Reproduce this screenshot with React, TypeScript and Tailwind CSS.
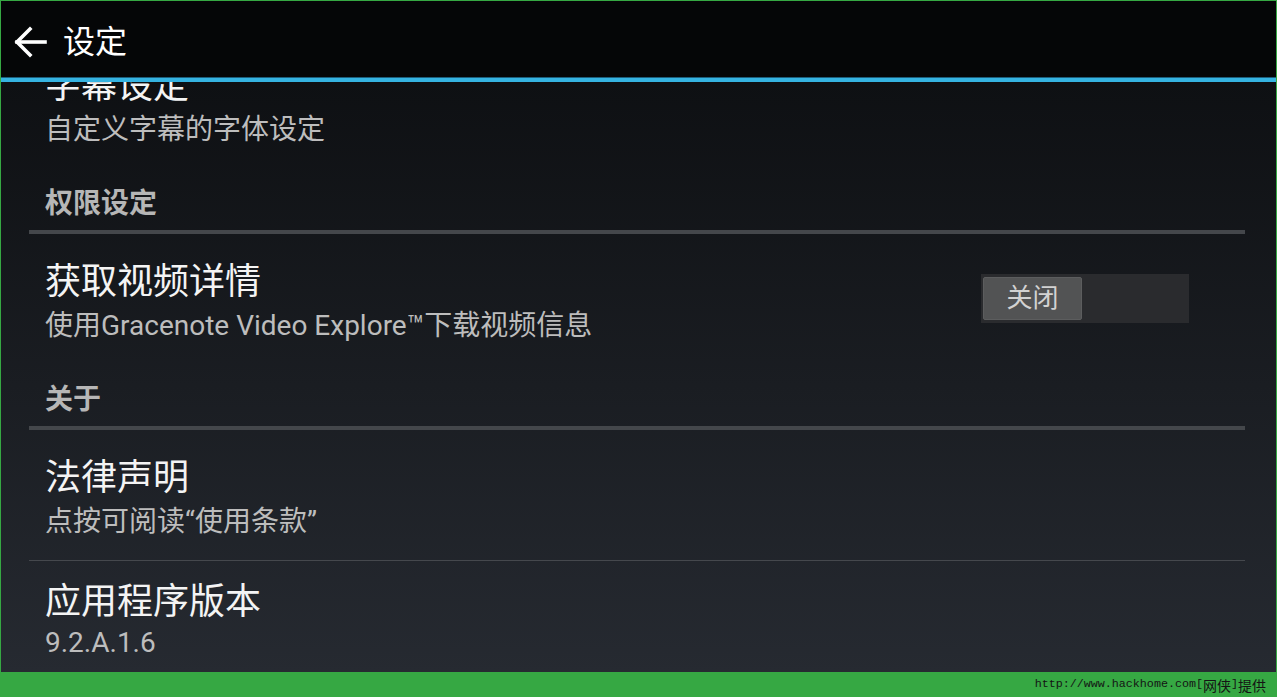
import React from 'react';

const cjk = "font-['Roboto','Noto_Sans_CJK_SC',sans-serif]";

function BackArrow() {
    return (
        <svg width="34" height="32" viewBox="0 0 34 32" fill="none" stroke="#ffffff" strokeWidth="3.6" strokeLinecap="square">
            <path d="M3 16 H31" />
            <path d="M16 3 L3 16 L16 29" />
        </svg>
    );
}

function SectionHeader({ label }: { label: string }) {
    return (
        <div className="mt-[32px]">
            <div className="pl-[16px] text-[28px] leading-[40px] font-bold text-[#b6b6b6]">{label}</div>
            <div className="mt-[6px] h-[4px] bg-[#44474b]" />
        </div>
    );
}

export default function App() {
    return (
        <div className={`w-[1277px] h-[697px] bg-[#36a843] flex flex-col px-px pt-px overflow-hidden ${cjk}`}>
            {/* action bar */}
            <div className="h-[76px] shrink-0 bg-[#050607] flex items-center pt-[6px] pl-[13px]">
                <BackArrow />
                <span className="ml-[15px] text-[32px] leading-none text-white">设定</span>
            </div>
            <div className="h-px shrink-0 bg-[#1d5f7c]" />
            <div className="h-[4px] shrink-0 bg-[#35b3e1]" />

            {/* preference list */}
            <div className="flex-1 overflow-hidden bg-gradient-to-b from-[#0e1013] to-[#262a31]">
                <div className="-mt-[18px] pl-[28px] pr-[31px]">
                    <div className="pl-[16px]">
                        <div className="text-[36px] leading-[44px] text-[#f4f4f4]">字幕设定</div>
                        <div className="text-[28px] leading-[44px] text-[#bdbdbd]">自定义字幕的字体设定</div>
                    </div>

                    <SectionHeader label="权限设定" />

                    <div className="flex pt-[26px] pl-[16px] pr-[56px]">
                        <div className="flex-1">
                            <div className="text-[36px] leading-[44px] text-[#f4f4f4]">获取视频详情</div>
                            <div className="text-[28px] leading-[44px] text-[#bdbdbd]">使用Gracenote Video Explore™下载视频信息</div>
                        </div>
                        <div className="mt-[14px] w-[208px] h-[49px] bg-[#2a2b2e] p-[2px] flex">
                            <div className="w-[99px] h-[43px] mt-px rounded-[2px] bg-[#525354] border border-[#5c5d5e] flex items-center justify-center text-[26px] text-[#d2d2d2]">
                                关闭
                            </div>
                        </div>
                    </div>

                    <SectionHeader label="关于" />

                    <div className="pt-[26px] pl-[16px] pb-[16px] border-b border-[#45484d]">
                        <div className="text-[36px] leading-[44px] text-[#f4f4f4]">法律声明</div>
                        <div className="text-[28px] leading-[44px] text-[#bdbdbd]">点按可阅读“使用条款”</div>
                    </div>

                    <div className="pt-[19px] pl-[16px]">
                        <div className="text-[36px] leading-[44px] text-[#f4f4f4]">应用程序版本</div>
                        <div className="text-[28px] leading-[38px] text-[#bdbdbd]">9.2.A.1.6</div>
                    </div>
                </div>
            </div>

            {/* watermark bar */}
            <div className="h-[25px] shrink-0 flex items-center justify-end pr-[10px] text-[#141414]">
                <span className="font-['Liberation_Mono',monospace] text-[11.7px]">http://www.hackhome.com[</span>
                <span className="font-['Noto_Sans_CJK_SC',sans-serif] text-[14px] leading-none">网侠</span>
                <span className="font-['Liberation_Mono',monospace] text-[11.7px]">]</span>
                <span className="font-['Noto_Sans_CJK_SC',sans-serif] text-[14px] leading-none">提供</span>
            </div>
        </div>
    );
}
